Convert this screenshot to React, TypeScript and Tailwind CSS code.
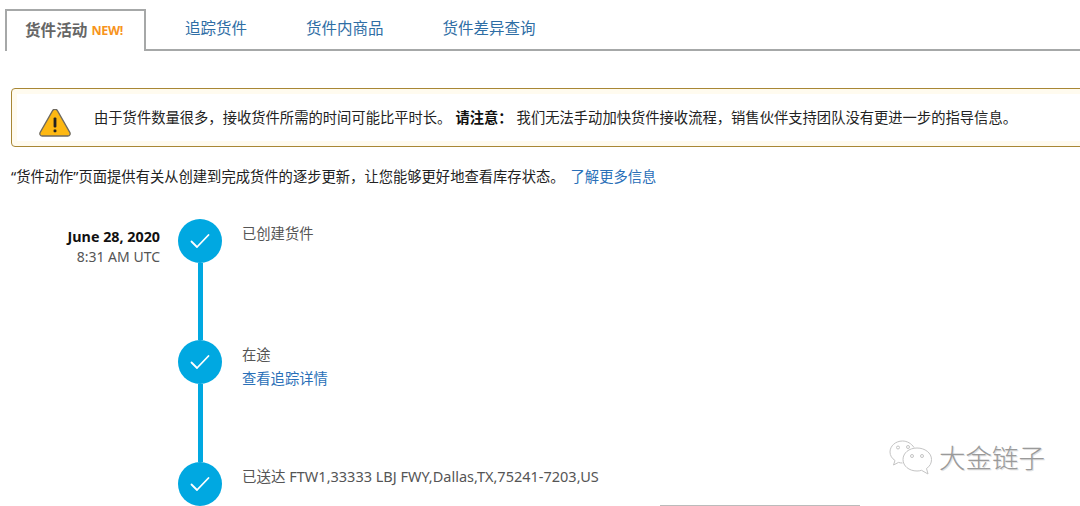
import React, { type ReactNode } from "react";

const FONT = "font-['Noto_Sans','Noto_Sans_CJK_SC',sans-serif]";

const TABS = ["追踪货件", "货件内商品", "货件差异查询"];

const TabLink = ({ label }: { label: string }): ReactNode => {
    return (
        <a className="h-[41px] pt-[8px] text-[15.5px] leading-[22px] text-[#2f6ea5] whitespace-nowrap">
            {label}
        </a>
    );
};

const WarningIcon = (): ReactNode => {
    return (
        <svg viewBox="0 0 32 28" width="32" height="28" className="shrink-0">
            <path
                d="M13.6 1.6 1.2 23.4C.3 25 1.2 27 3.2 27h25.6c2 0 2.9-2 2-3.6L18.4 1.6c-1-1.8-3.8-1.8-4.8 0Z"
                fill="#fdb813"
                stroke="#6f6a60"
                strokeWidth="1.3"
            />
            <rect x="14.6" y="8.5" width="2.8" height="10" rx="1" fill="#222" />
            <rect x="14.6" y="20.4" width="2.8" height="2.8" rx="0.6" fill="#222" />
        </svg>
    );
};

const Check = (): ReactNode => {
    return (
        <svg viewBox="0 0 20 16" width="20" height="16" fill="none">
            <path
                d="M1.5 8.5 7 14 18.5 2"
                stroke="#fff"
                strokeWidth="1.8"
                strokeLinecap="round"
                strokeLinejoin="round"
            />
        </svg>
    );
};

const TimelineRow = ({
    date,
    time,
    children,
    height,
}: {
    date?: string;
    time?: string;
    children: ReactNode;
    height: string;
}): ReactNode => {
    return (
        <div className={`flex ${height}`}>
            <div className="w-[160px] shrink-0 pt-[8px] text-right">
                {date && (
                    <div className="text-[14.3px] leading-[20px] font-bold text-[#111]">
                        {date}
                    </div>
                )}
                {time && (
                    <div className="text-[14px] leading-[20px] text-[#555]">
                        {time}
                    </div>
                )}
            </div>
            <div className="ml-[18px] w-[44px] shrink-0 flex flex-col items-center">
                <div className="w-[44px] h-[44px] shrink-0 rounded-full bg-[#00a8e1] flex items-center justify-center">
                    <Check />
                </div>
                <div className="w-[5px] flex-1 bg-[#00a8e1]" />
            </div>
            <div className="ml-[20px] pt-[4px] text-[14.3px] leading-[22px] text-[#555]">
                {children}
            </div>
        </div>
    );
};

export default function App(): ReactNode {
    return (
        <div className={`relative w-[1080px] h-[506px] overflow-hidden bg-white ${FONT}`}>
            <div className="flex h-[51px] pt-[9px] pl-[5px]">
                <div className="w-[141px] h-[42px] shrink-0 flex items-center pl-[18px] gap-[4px] border-2 border-b-0 border-[#a6a8a8] bg-white">
                    <span className="text-[15.6px] font-bold text-[#666]">货件活动</span>
                    <span className="text-[12.5px] font-bold text-[#f7941d] tracking-[-0.3px]">NEW!</span>
                </div>
                <div className="flex-1 flex gap-[59px] pl-[39px] border-b-2 border-[#a6a8a8]">
                    {TABS.map((t) => (
                        <TabLink key={t} label={t} />
                    ))}
                </div>
            </div>

            <div className="ml-[11px] mt-[37px] w-[1090px] h-[59px] flex items-center rounded-[4px] border border-[#a88734] bg-white shadow-[inset_0_0_0_5px_#fffbef]">
                <div className="ml-[27px] mt-[10px]">
                    <WarningIcon />
                </div>
                <p className="ml-[23px] text-[14.3px] text-[#222] whitespace-nowrap">
                    由于货件数量很多，接收货件所需的时间可能比平时长。
                    <span className="ml-[4px] font-bold text-[#111]">请注意：</span>
                    <span className="ml-[4px]">
                        我们无法手动加快货件接收流程，销售伙伴支持团队没有更进一步的指导信息。
                    </span>
                </p>
            </div>

            <p className="ml-[11px] mt-[19px] text-[14.3px] leading-[22px] text-[#222] whitespace-nowrap">
                “货件动作”页面提供有关从创建到完成货件的逐步更新，让您能够更好地查看库存状态。
                <a className="ml-[6px] text-[#2a70b8]">了解更多信息</a>
            </p>

            <div className="mt-[31px]">
                <TimelineRow date="June 28, 2020" time="8:31 AM UTC" height="h-[121px]">
                    已创建货件
                </TimelineRow>
                <TimelineRow height="h-[122px]">
                    <div>在途</div>
                    <a className="block mt-[2px] text-[#2a70b8]">查看追踪详情</a>
                </TimelineRow>
                <TimelineRow height="h-[60px]">
                    <span className="block -mt-[1px] text-[14.5px]">已送达 FTW1,33333 LBJ FWY,Dallas,TX,75241-7203,US</span>
                </TimelineRow>
            </div>

            {/* edge of the next card, cut off by the picture */}
            <div className="absolute left-[660px] top-[505px] w-[200px] h-px bg-[#bbb]" />

            {/* watermark */}
            <div className="absolute left-[888px] top-[438px] flex items-center gap-[5px]">
                <svg viewBox="0 0 46 40" width="46" height="40" fill="none" stroke="#c4c4c4" strokeWidth="1">
                    <path d="M26 9.5C23.5 5.5 19 3 14.5 3 7.5 3 2 8 2 14c0 3.5 2 6.5 5 8.5L5.5 27l5-2.6c1.4.4 2.5.6 4 .6" />
                    <path d="M29 10c-8 0-14 5-14 11.5S21 33 29 33c1.6 0 3-.2 4.500-.7L40 36l-1.500-5.500c3.500-2.200 5-5.500 5-9C43.500 15 37 10 29 10Z" fill="#fff" />
                    <circle cx="10" cy="9.5" r="1.5" />
                    <circle cx="20" cy="9" r="1.5" />
                    <circle cx="24" cy="18" r="1.5" />
                    <circle cx="34" cy="18" r="1.5" />
                </svg>
                <span className="text-[26.5px] leading-[34px] text-[#9a9a9a] font-light [text-shadow:1px_1px_0_#e2e2e2]">大金链子</span>
            </div>
        </div>
    );
}
